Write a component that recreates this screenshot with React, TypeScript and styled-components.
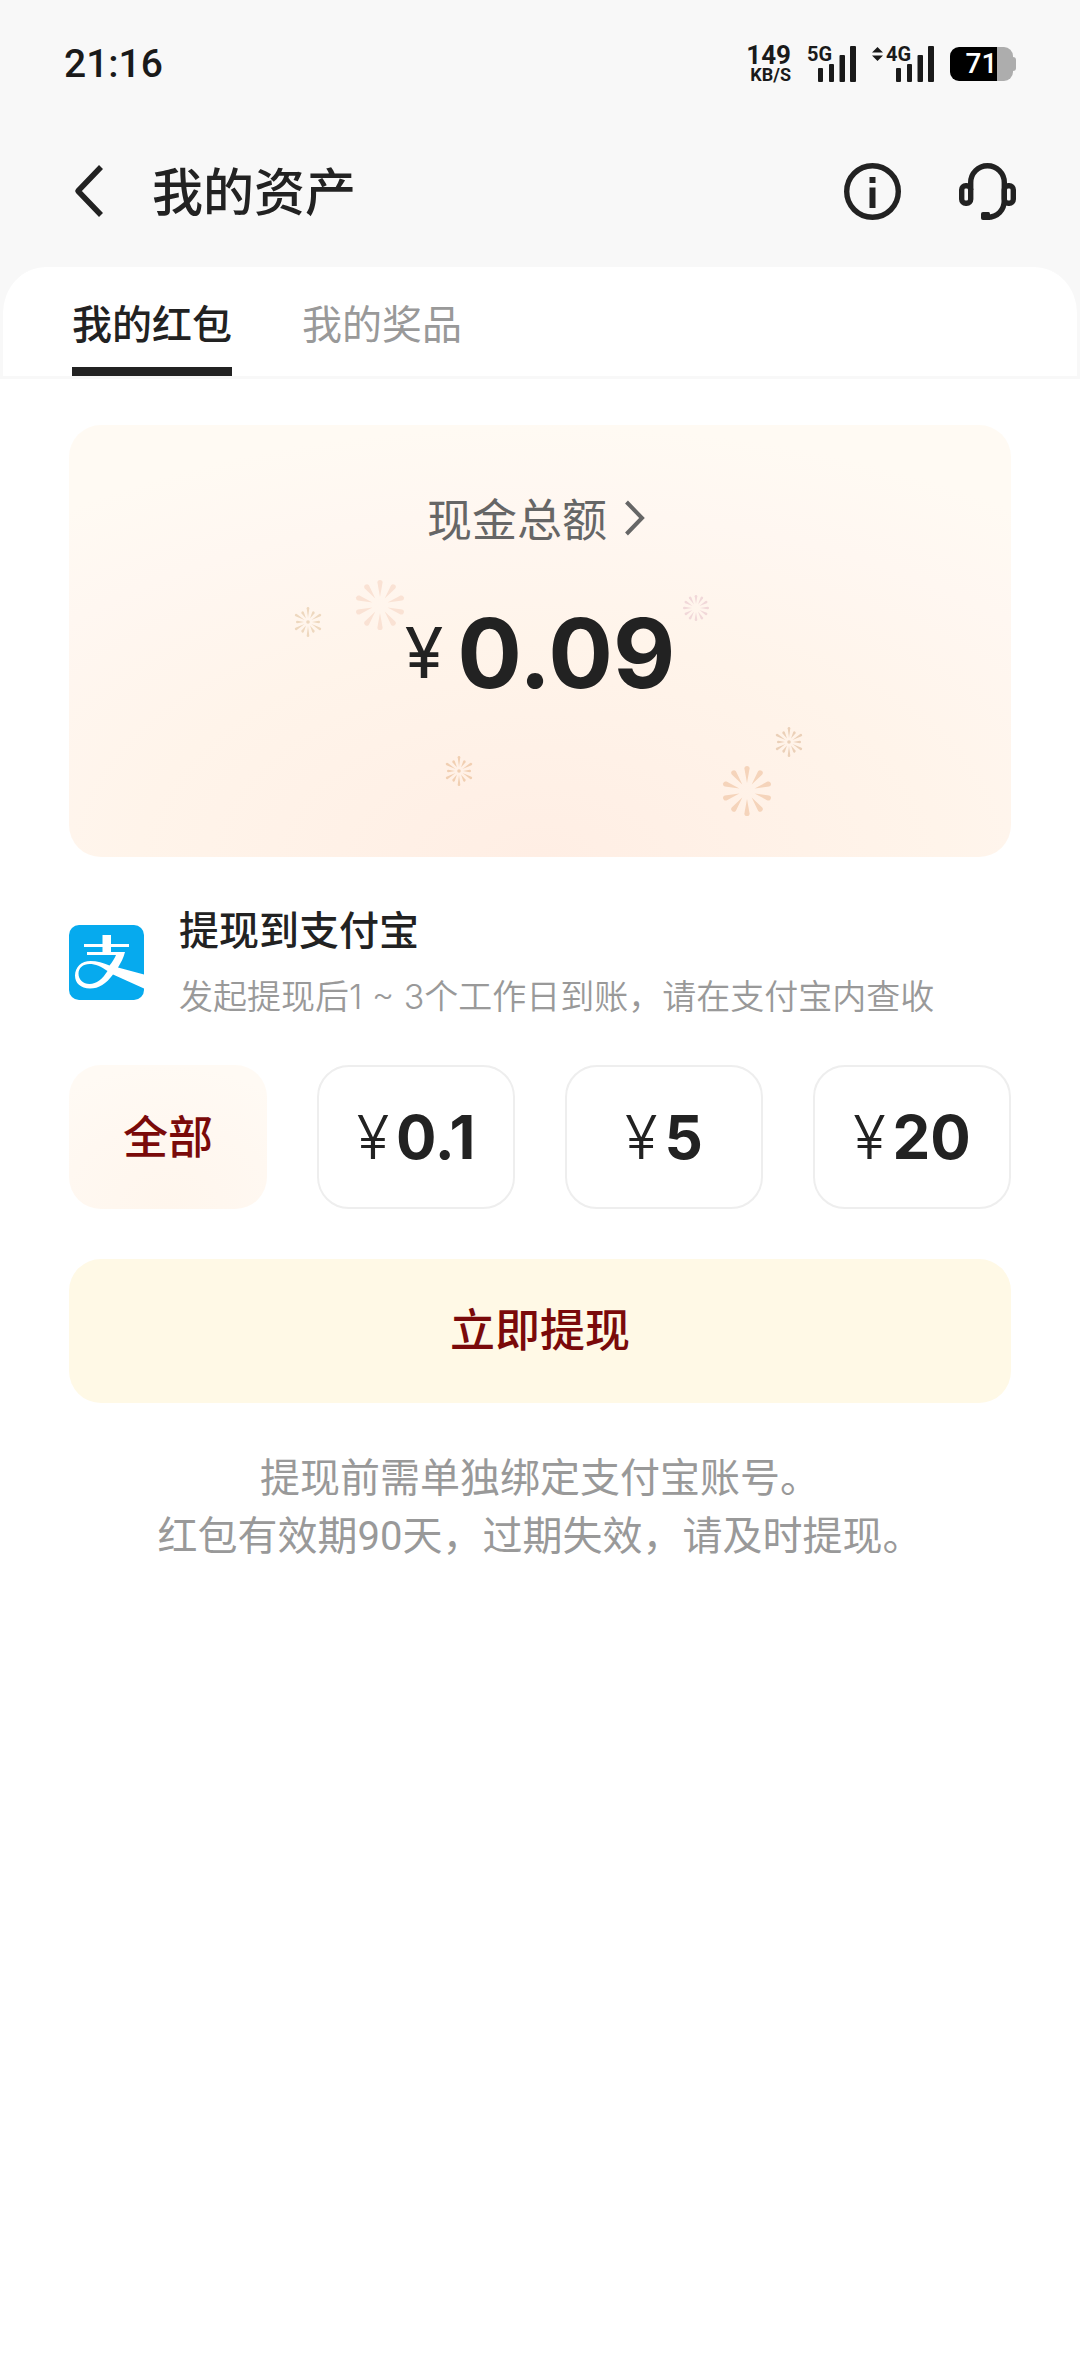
import React, { useState } from 'react';
import styled, { createGlobalStyle } from 'styled-components';

const cjk = `"Noto Sans CJK SC", sans-serif`;
const ink = '#222222';
const wine = '#7a0a0a';

const GlobalStyle = createGlobalStyle`
  * { box-sizing: border-box; }
  body { margin: 0; background: #ffffff; color: ${ink}; font-family: Roboto, ${cjk}; }
  button { margin: 0; padding: 0; border: 0; background: none; color: inherit; font: inherit; cursor: pointer; }
  h1, h2, p { margin: 0; font-weight: 400; }
  svg { display: block; flex: none; }
`;

const Top = styled.div`
  background: #f8f8f8;
`;

const StatusBar = styled.div`
  display: flex;
  align-items: center;
  justify-content: space-between;
  height: 128px;
  padding: 0 64px;
  color: #1a1a1a;
`;

const Clock = styled.span`
  font-size: 39px;
  font-weight: 500;
  line-height: 48px;
`;

const StatusIcons = styled.div`
  display: flex;
  align-items: center;
  gap: 16px;
`;

const Speed = styled.div`
  display: grid;
  justify-items: end;
  font-family: Roboto, sans-serif;
  font-weight: 700;
`;

const SpeedValue = styled.span`
  font-size: 26px;
  line-height: 22px;
`;

const SpeedUnit = styled.span`
  font-size: 18px;
  line-height: 18px;
`;

const SignalBox = styled.div`
  display: grid;
  width: ${(p: { $wide?: boolean }) => (p.$wide ? '62px' : '49px')};
  justify-items: end;
  > * { grid-area: 1 / 1; }
`;

const SignalLabel = styled.span`
  display: flex;
  align-items: center;
  gap: 3px;
  justify-self: start;
  height: 16px;
  font-size: 20px;
  font-weight: 700;
  line-height: 16px;
`;

const Battery = styled.div`
  display: flex;
  align-items: center;
`;

const BatteryBody = styled.div`
  display: flex;
  align-items: center;
  justify-content: center;
  width: 63px;
  height: 34px;
  border-radius: 9px;
  background: linear-gradient(to right, #000000 75%, #adadad 75%);
  color: #ffffff;
  font-size: 28px;
  font-weight: 500;
  line-height: 34px;
`;

const BatteryNub = styled.div`
  width: 3px;
  height: 14px;
  border-radius: 0 3px 3px 0;
  background: #adadad;
`;

const NavBar = styled.header`
  display: flex;
  align-items: center;
  height: 126px;
  padding: 0 64px 0 68px;
`;

const NavTitle = styled.h1`
  flex: 1;
  margin-left: 44px;
  padding-bottom: 4px;
  font-family: ${cjk};
  font-size: 51px;
  font-weight: 500;
  line-height: 72px;
`;

const NavActions = styled.div`
  display: flex;
  gap: 58px;
`;

const Tabs = styled.div`
  display: flex;
  gap: 70px;
  height: 112px;
  margin-top: 13px;
  padding: 0 69px;
  border: solid #f8f8f8;
  border-width: 0 3px 3px;
  border-radius: 46px 46px 0 0;
  background: #ffffff;
`;

const Tab = styled.button`
  display: flex;
  align-items: center;
  padding-top: 10px;
  border-bottom: 9px solid transparent;
  color: #999999;
  font-family: ${cjk};
  font-size: 40px;
  line-height: 56px;
  &[aria-selected='true'] {
    border-bottom-color: ${ink};
    color: ${ink};
    font-weight: 500;
  }
`;

const Content = styled.main`
  padding: 46px 69px;
`;

const Card = styled.section`
  position: relative;
  display: flex;
  flex-direction: column;
  align-items: center;
  height: 432px;
  padding-top: 60px;
  border-radius: 32px;
  overflow: hidden;
  background: radial-gradient(ellipse 85% 100% at 50% 100%, #ffeee4 0%, #fff4ea 50%, #fff7f1 80%, #fffaf3 100%);
`;

const Sparks = styled.svg`
  position: absolute;
  inset: 0;
  width: 100%;
  height: 100%;
`;

const TotalLink = styled.button`
  position: relative;
  display: flex;
  align-items: center;
  gap: 18px;
  padding-right: 8px;
  color: #666666;
  font-family: ${cjk};
  font-size: 45px;
  line-height: 66px;
`;

const Total = styled.p`
  position: relative;
  display: flex;
  align-items: center;
  gap: 14px;
  margin-top: 38px;
  font-family: Inter, sans-serif;
  font-size: 96px;
  font-weight: 700;
  line-height: 128px;
`;

const TotalSign = styled.span`
  font-size: 70px;
  font-weight: 400;
`;

const Payee = styled.section`
  display: flex;
  align-items: center;
  gap: 35px;
  margin-top: 36px;
`;

const PayeeName = styled.h2`
  font-family: ${cjk};
  font-size: 40px;
  font-weight: 500;
  line-height: 70px;
`;

const PayeeHint = styled.p`
  color: #999999;
  font-family: Inter, ${cjk};
  font-size: 34px;
  font-weight: 350;
  line-height: 68px;
`;

const Amounts = styled.div`
  display: grid;
  grid-template-columns: repeat(4, 1fr);
  gap: 50px;
  margin-top: 34px;
`;

const Amount = styled.button`
  display: flex;
  align-items: center;
  justify-content: center;
  gap: 7px;
  height: 144px;
  border: 2px solid #eeeeee;
  border-radius: 32px;
  font-family: Inter, sans-serif;
  font-size: 60px;
  font-weight: 700;
  &[aria-pressed='true'] {
    border-color: transparent;
    background: radial-gradient(ellipse 90% 100% at 50% 100%, #fff6ed 0%, #fff8f1 60%, #fffaf4 100%) border-box;
    color: ${wine};
  }
`;

const AllLabel = styled.span`
  padding-bottom: 6px;
  font-family: ${cjk};
  font-size: 45px;
  font-weight: 500;
`;

const Sign = styled.span`
  font-weight: 300;
`;

const Withdraw = styled.button`
  display: block;
  width: 100%;
  height: 144px;
  margin-top: 50px;
  padding-bottom: 8px;
  border-radius: 32px;
  background: #fff9e6;
  color: ${wine};
  font-family: ${cjk};
  font-size: 45px;
  font-weight: 500;
`;

const Note = styled.p`
  margin-top: 47px;
  color: #999999;
  font-family: Roboto, ${cjk};
  font-size: 40px;
  line-height: 58px;
  text-align: center;
`;

const Bars = () => (
  <svg width="38" height="36" viewBox="0 0 38 36" fill="currentColor" aria-hidden="true">
    <rect x="0" y="22" width="5" height="14" rx="1" />
    <rect x="11" y="18" width="5" height="18" rx="1" />
    <rect x="21.5" y="9" width="5.5" height="27" rx="1" />
    <rect x="32" y="0" width="6" height="36" rx="1" />
  </svg>
);

const DataArrows = () => (
  <svg width="11" height="14" viewBox="0 0 11 14" fill="currentColor" aria-hidden="true">
    <path d="M5.500 0L11 5.500H0zM5.500 14L11 8.500H0z" />
  </svg>
);

const BackIcon = () => (
  <svg width="40" height="56" viewBox="0 0 40 56" fill="none" stroke="currentColor" strokeWidth="5.5" strokeLinejoin="round" aria-hidden="true">
    <path d="M33 4L10 28l23 24" />
  </svg>
);

const InfoIcon = () => (
  <svg width="57" height="57" viewBox="0 0 57 57" aria-hidden="true">
    <circle cx="28.5" cy="28.5" r="25.8" fill="none" stroke="currentColor" strokeWidth="5.4" />
    <path d="M25.500 14h6v6h-6zM25.500 24.500h6v20.500h-6z" fill="currentColor" />
  </svg>
);

const HeadsetIcon = () => (
  <svg width="57" height="57" viewBox="0 0 57 57" fill="none" stroke="currentColor" strokeWidth="5.4" aria-hidden="true">
    <rect x="2.700" y="22.800" width="9" height="17.5" rx="4" />
    <rect x="45.300" y="22.800" width="9" height="17.5" rx="4" />
    <path d="M11.700 27v-7.500a16.800 16.800 0 0 1 33.600 0V37c0 10-6.500 17.300-17 17.300" />
    <path d="M24 49h5.500q1.500 0 1.500 2v6h-7q-2 0-2-2v-4q0-2 2-2z" fill="currentColor" stroke="none" />
  </svg>
);

const ChevronIcon = () => (
  <svg width="20" height="36" viewBox="0 0 20 36" fill="none" stroke="currentColor" strokeWidth="4" aria-hidden="true">
    <path d="M1.500 2L17 18 1.500 34" />
  </svg>
);

const AlipayLogo = () => (
  <svg width="75" height="75" viewBox="0 0 75 75" role="img" aria-label="支付宝">
    <rect width="75" height="75" rx="10" fill="#06aaee" />
    <path d="M33.500 10H42v9h18v3H42v5h14c-1.500 6-4 10.500-7 15.500L75 49.500v14L44 49.500C37 59 30 63.500 21 63.500 11.500 63.500 6 58 6 50.500 6 42 12.500 36 21.500 36c6.500 0 13 2 19 4.500 2.800-3.500 5-7 6.500-10.500H18v-3h15.500v-5H15v-3h18.500z" fill="#fff" />
    <path d="M38.500 46C32 41.500 26.500 39 20.500 39 14 39 9.500 43 9.500 48.500c0 6 4.500 10.500 11 10.500 7 0 13-5 18-13z" fill="#06aaee" />
  </svg>
);

type SparkProps = {
  x: number;
  y: number;
  r: number;
  inner: number;
  color: string;
  rays?: number;
  width: number;
  short?: boolean;
};

const Spark = ({ x, y, r, inner, color, rays = 12, width, short }: SparkProps) => (
  <g transform={`translate(${x} ${y})`} fill={color}>
    {Array.from({ length: rays }, (_, i) => {
      const outer = short && i % 2 ? r * 0.8 : r;
      return (
        <path
          key={i}
          transform={`rotate(${(i * 360) / rays})`}
          d={`M0 ${-inner}L${-width} ${-outer + width}A${width} ${width} 0 0 1 ${width} ${-outer + width}z`}
        />
      );
    })}
    {short && <circle r="1.8" />}
  </g>
);

const amounts = ['全部', '0.1', '5', '20'];
const tabs = ['我的红包', '我的奖品'];

export default function App() {
  const [tab, setTab] = useState(0);
  const [amount, setAmount] = useState(0);

  return (
    <>
      <GlobalStyle />
      <Top>
        <StatusBar>
          <Clock>21:16</Clock>
          <StatusIcons>
            <Speed>
              <SpeedValue>149</SpeedValue>
              <SpeedUnit>KB/S</SpeedUnit>
            </Speed>
            <SignalBox>
              <SignalLabel>5G</SignalLabel>
              <Bars />
            </SignalBox>
            <SignalBox $wide>
              <SignalLabel>
                <DataArrows />
                4G
              </SignalLabel>
              <Bars />
            </SignalBox>
            <Battery>
              <BatteryBody>71</BatteryBody>
              <BatteryNub />
            </Battery>
          </StatusIcons>
        </StatusBar>
        <NavBar>
          <button aria-label="返回"><BackIcon /></button>
          <NavTitle>我的资产</NavTitle>
          <NavActions>
            <button aria-label="说明"><InfoIcon /></button>
            <button aria-label="客服"><HeadsetIcon /></button>
          </NavActions>
        </NavBar>
        <Tabs role="tablist">
          {tabs.map((name, i) => (
            <Tab key={name} role="tab" aria-selected={tab === i} onClick={() => setTab(i)}>
              {name}
            </Tab>
          ))}
        </Tabs>
      </Top>
      <Content>
        <Card>
          <Sparks viewBox="0 0 942 432" aria-hidden="true">
            <Spark x={239} y={197} r={15} inner={4} color="#eed8bf" width={1.3} short />
            <Spark x={311} y={180} r={25} inner={8} color="#fae2d4" width={2.6} rays={10} />
            <Spark x={627} y={183} r={13} inner={4} color="#f1d8d9" width={1.3} />
            <Spark x={390} y={346} r={15} inner={4} color="#f1cfb2" width={1.3} short />
            <Spark x={720} y={317} r={15} inner={4} color="#ebd0b8" width={1.3} short />
            <Spark x={678} y={366} r={25} inner={8} color="#f5d4bb" width={2.6} rays={10} />
          </Sparks>
          <TotalLink>
            现金总额
            <ChevronIcon />
          </TotalLink>
          <Total>
            <TotalSign>¥</TotalSign>
            0.09
          </Total>
        </Card>
        <Payee>
          <AlipayLogo />
          <div>
            <PayeeName>提现到支付宝</PayeeName>
            <PayeeHint>发起提现后1 ~ 3个工作日到账，请在支付宝内查收</PayeeHint>
          </div>
        </Payee>
        <Amounts>
          {amounts.map((value, i) => (
            <Amount key={value} aria-pressed={amount === i} onClick={() => setAmount(i)}>
              {i === 0 ? (
                <AllLabel>{value}</AllLabel>
              ) : (
                <>
                  <Sign>¥</Sign>
                  {value}
                </>
              )}
            </Amount>
          ))}
        </Amounts>
        <Withdraw>立即提现</Withdraw>
        <Note>
          提现前需单独绑定支付宝账号。
          <br />
          红包有效期90天，过期失效，请及时提现。
        </Note>
      </Content>
    </>
  );
}
